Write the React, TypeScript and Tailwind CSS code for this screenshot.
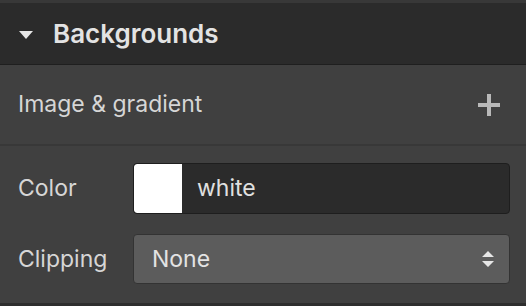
export default function App() {
  return (
    <div className="w-[526px] h-[306px] bg-[#404040] font-['Inter','Liberation_Sans',sans-serif] text-[#e0e0e0] flex flex-col overflow-hidden">
      <div className="h-[3px] bg-[#383838]" />
      {/* Section header */}
      <div className="h-[62px] bg-[#2b2b2b] border-b border-[#1f1f1f] flex items-center pl-[18px]">
        <svg width="16" height="10" viewBox="0 0 16 10" className="mr-[19px] mt-[2px]">
          <path d="M1 1h14L8 9z" fill="#e6e6e6" />
        </svg>
        <span className="text-[26px] font-semibold text-[#e3e3e3]">Backgrounds</span>
      </div>

      {/* Image & gradient */}
      <div className="h-[81px] flex items-center justify-between pl-[18px] pr-[26px] border-b-2 border-[#383838]">
        <span className="text-[23px] text-[#d6d6d6]">Image &amp; gradient</span>
        <svg width="22" height="22" viewBox="0 0 22 22">
          <path d="M11 0v22M0 11h22" stroke="#b9b9b9" strokeWidth="4" />
        </svg>
      </div>

      {/* Color + clipping */}
      <div className="flex-1 flex flex-col gap-[20px] pt-[17px] pl-[18px] pr-[16px]">
        <div className="flex items-center">
          <span className="w-[115px] text-[23px] text-[#d6d6d6]">Color</span>
          <div className="flex-1 h-[51px] flex items-center rounded-[4px] border border-[#1e1e1e] bg-[#2b2b2b] overflow-hidden">
            <div className="w-[48px] h-full bg-white rounded-l-[3px]" />
            <span className="ml-[15px] text-[23px] text-[#e0e0e0]">white</span>
          </div>
        </div>
        <div className="flex items-center">
          <span className="w-[115px] text-[23px] text-[#d6d6d6]">Clipping</span>
          <div className="flex-1 h-[50px] flex items-center justify-between rounded-[4px] border border-[#333333] bg-[#5c5c5c] pl-[18px] pr-[14px]">
            <span className="text-[23px] text-[#e3e3e3]">None</span>
            <svg width="14" height="18" viewBox="0 0 14 18">
              <path d="M7 1l6 6H1z M1 11h12l-6 6z" fill="#e6e6e6" />
            </svg>
          </div>
        </div>
      </div>
      <div className="h-[3px] bg-[#2e2e2e]" />
    </div>
  )
}
